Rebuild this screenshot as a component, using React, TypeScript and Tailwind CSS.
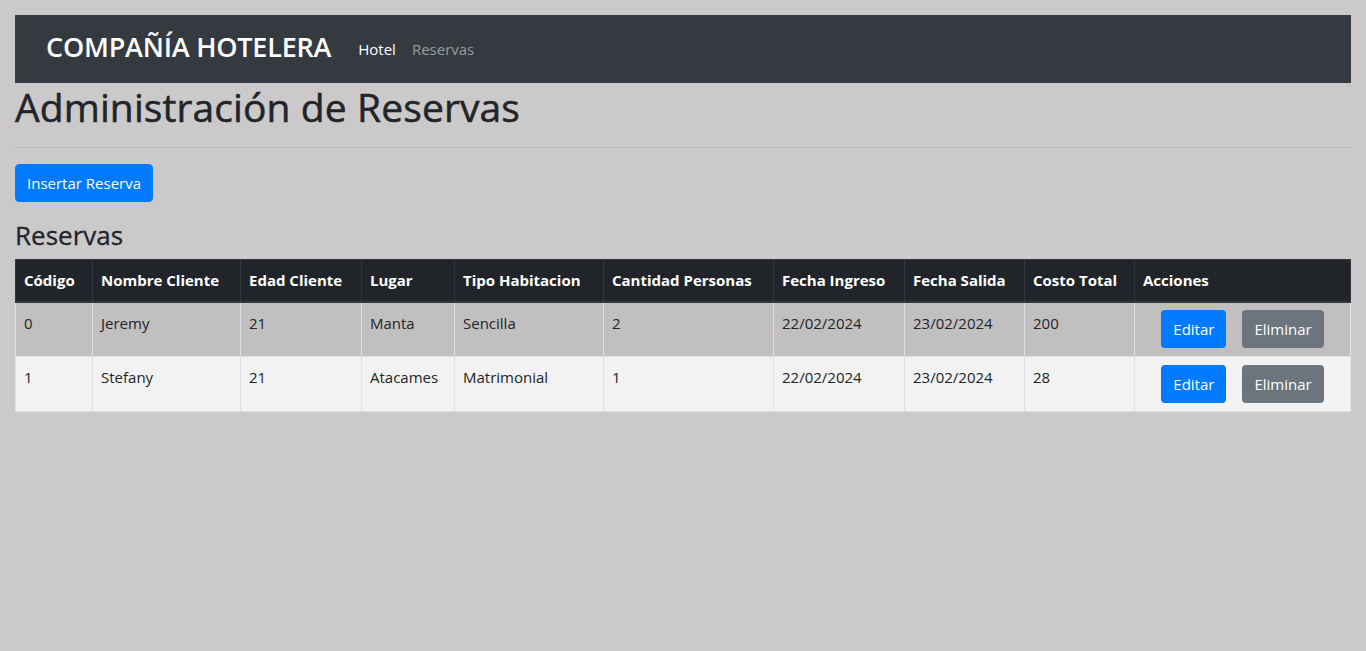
const reservas = [
  { codigo: 0, nombre: "Jeremy", edad: 21, lugar: "Manta", tipo: "Sencilla", cantidad: 2, ingreso: "22/02/2024", salida: "23/02/2024", costo: 200 },
  { codigo: 1, nombre: "Stefany", edad: 21, lugar: "Atacames", tipo: "Matrimonial", cantidad: 1, ingreso: "22/02/2024", salida: "23/02/2024", costo: 28 },
];

const columnas = [
  { label: "Código", w: "w-[77px]" },
  { label: "Nombre Cliente", w: "w-[148px]" },
  { label: "Edad Cliente", w: "w-[121px]" },
  { label: "Lugar", w: "w-[93px]" },
  { label: "Tipo Habitacion", w: "w-[149px]" },
  { label: "Cantidad Personas", w: "w-[170px]" },
  { label: "Fecha Ingreso", w: "w-[131px]" },
  { label: "Fecha Salida", w: "w-[120px]" },
  { label: "Costo Total", w: "w-[110px]" },
  { label: "Acciones", w: "" },
];

const Navbar = () => (
  <nav className="flex h-[68px] items-center bg-[#343a40] pl-[31px]">
    <a href="#" className="mb-[6px] text-[27px] font-semibold leading-none tracking-[-0.2px] text-white">
      COMPAÑÍA HOTELERA
    </a>
    <ul className="ml-[27px] flex items-center gap-4 text-[15px]">
      <li className="text-white">Hotel</li>
      <li className="text-[#999b9d]">Reservas</li>
    </ul>
  </nav>
);

export default function App() {
  return (
    <div className="min-h-[651px] bg-[#cbc9ca] px-[15px] pt-[15px] font-['Open_Sans','Noto_Sans',sans-serif] text-[#212529]">
      <Navbar />
      <h1 className="mb-2 text-[39px] font-medium leading-[48px] tracking-[0.1px] [-webkit-text-stroke:0.5px_#212529]">
        Administración de Reservas
      </h1>
      <hr className="mb-4 mt-4 border-t border-[#b8b7b8]" />
      <button className="rounded border border-[#007bff] bg-[#007bff] px-[11px] py-1.5 text-[15px] leading-6 text-white">Insertar Reserva</button>
      <h3 className="mb-[7px] mt-4 text-[26px] font-medium leading-[34px] [-webkit-text-stroke:0.3px_#212529]">Reservas</h3>
      <table className="w-full table-fixed border-collapse text-[15px]">
        <thead>
          <tr className="bg-[#212529] text-white">
            {columnas.map((c) => (
              <th
                key={c.label}
                className={`${c.w} h-[42px] border border-b-2 border-[#32383e] px-[8px] text-left text-[15px] font-bold`}
              >
                {c.label}
              </th>
            ))}
          </tr>
        </thead>
        <tbody>
          {reservas.map((r, i) => (
            <tr key={r.codigo} className={i % 2 === 0 ? "bg-[#c1bfc0]" : "bg-[#f2f2f2]"}>
              {[r.codigo, r.nombre, r.edad, r.lugar, r.tipo, r.cantidad, r.ingreso, r.salida, r.costo].map((v, j) => (
                <td key={j} className="h-[55px] border border-[#dee2e6] px-[8px] pb-3 pt-[8px] align-top leading-6">
                  {v}
                </td>
              ))}
              <td className="border border-[#dee2e6] text-center align-middle">
                <div className="flex items-center justify-center gap-4">
                  <button className="rounded bg-[#007bff] px-3 py-1.5 text-[15px] leading-[26px] text-white">Editar</button>
                  <button className="rounded bg-[#6c757d] px-3 py-1.5 text-[15px] leading-[26px] text-white">Eliminar</button>
                </div>
              </td>
            </tr>
          ))}
        </tbody>
      </table>
    </div>
  );
}
